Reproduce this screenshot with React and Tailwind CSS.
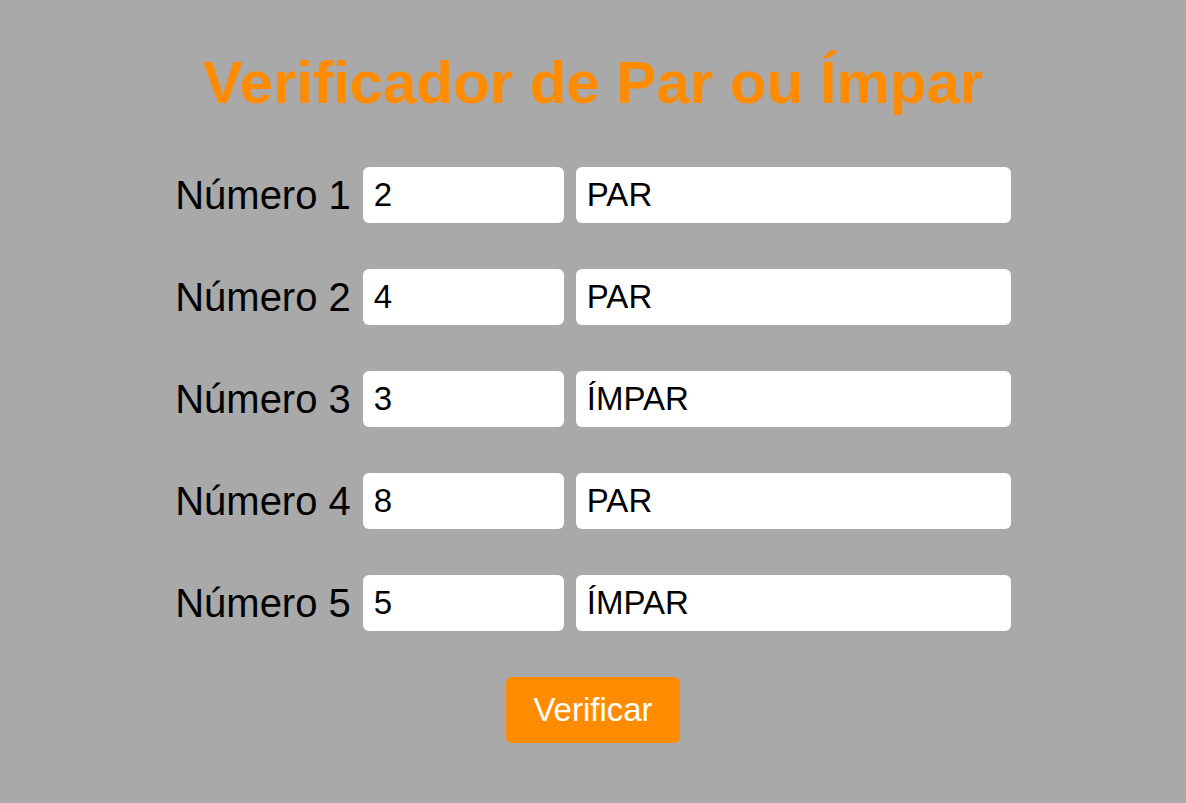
import React from 'react';

const rows = [
  { n: 1, v: '2', r: 'PAR' },
  { n: 2, v: '4', r: 'PAR' },
  { n: 3, v: '3', r: 'ÍMPAR' },
  { n: 4, v: '8', r: 'PAR' },
  { n: 5, v: '5', r: 'ÍMPAR' },
];

export default function App() {
  return (
    <div className="min-h-screen bg-[#a9a9a9] pt-[48px] font-['Liberation_Sans',Arial,sans-serif]">
      <h1 className="text-center text-[60px] leading-[69px] font-bold text-[#ff8c00]">
        Verificador de Par ou Ímpar
      </h1>

      <div className="mt-[50px] flex flex-col items-center gap-[46px]">
        {rows.map((row) => (
          <div key={row.n} className="flex items-center">
            <label className="mr-[12px] text-[40px] leading-none text-black">Número {row.n}</label>
            <input
              readOnly
              value={row.v}
              className="w-[201px] h-[56px] rounded-md bg-white px-[11px] text-[33px] text-black outline-none"
            />
            <input
              readOnly
              value={row.r}
              className="ml-[12px] w-[435px] h-[56px] rounded-md bg-white px-[11px] text-[33px] text-black outline-none"
            />
          </div>
        ))}

        <button className="w-[174px] h-[66px] rounded-md bg-[#ff8c00] text-[33px] text-white">
          Verificar
        </button>
      </div>
    </div>
  );
}
